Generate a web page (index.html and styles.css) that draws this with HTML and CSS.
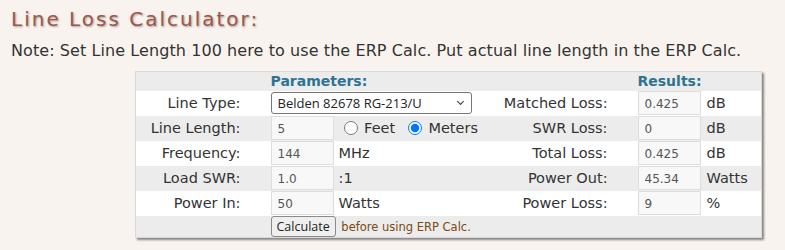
FILE: index.html
```html
<!DOCTYPE html>
<html lang="en">
  <head>
    <meta charset="UTF-8" />
    <title>Line Loss Calculator</title>
    <link rel="stylesheet" href="styles.css">
  </head>
  <body>
    <h2 class="calc-title">Line Loss Calculator:</h2>
    <p class="note">Note: Set Line Length 100 here to use the ERP Calc. Put actual line length in the ERP Calc.</p>

    <table class="calc">
      <colgroup>
        <col class="c-lbl">
        <col class="c-in">
        <col class="c-unit">
        <col class="c-lbl2">
        <col class="c-in2">
        <col class="c-unit2">
      </colgroup>
      <tr class="head">
        <td></td>
        <th colspan="2">Parameters:</th>
        <td></td>
        <th colspan="2">Results:</th>
      </tr>
      <tr>
        <td class="lbl">Line Type:</td>
        <td colspan="2">
          <span class="select-wrap">
            <select class="line-type">
              <option>Belden 82678 RG-213/U</option>
            </select>
          </span>
        </td>
        <td class="lbl">Matched Loss:</td>
        <td><input class="num" value="0.425" readonly></td>
        <td class="unit">dB</td>
      </tr>
      <tr>
        <td class="lbl">Line Length:</td>
        <td><input class="num" value="5"></td>
        <td class="unit">
          <label><input type="radio" name="len"> Feet</label>
          <label><input type="radio" name="len" checked> Meters</label>
        </td>
        <td class="lbl">SWR Loss:</td>
        <td><input class="num" value="0" readonly></td>
        <td class="unit">dB</td>
      </tr>
      <tr>
        <td class="lbl">Frequency:</td>
        <td><input class="num" value="144"></td>
        <td class="unit">MHz</td>
        <td class="lbl">Total Loss:</td>
        <td><input class="num" value="0.425" readonly></td>
        <td class="unit">dB</td>
      </tr>
      <tr>
        <td class="lbl">Load SWR:</td>
        <td><input class="num" value="1.0"></td>
        <td class="unit">:1</td>
        <td class="lbl">Power Out:</td>
        <td><input class="num" value="45.34" readonly></td>
        <td class="unit">Watts</td>
      </tr>
      <tr>
        <td class="lbl">Power In:</td>
        <td><input class="num" value="50"></td>
        <td class="unit">Watts</td>
        <td class="lbl">Power Loss:</td>
        <td><input class="num" value="9" readonly></td>
        <td class="unit">%</td>
      </tr>
      <tr class="foot">
        <td></td>
        <td colspan="5">
          <button class="btn">Calculate</button>
          <span class="hint">before using ERP Calc.</span>
        </td>
      </tr>
    </table>
  </body>
</html>
```

FILE: styles.css
```css
*,
*::before,
*::after {
  box-sizing: border-box;
}
:root {
  --bg: #f8f3ef;
  --row-alt: #ececec;
  --title: #9d5848;
  --head: #2f7393;
  --text: #333333;
  --field: #f8f8f8;
  --field-border: #dddddd;
}
body {
  margin: 0;
  padding: 9px 11px;
  background: var(--bg);
  color: var(--text);
  font-family: "DejaVu Sans", Verdana, sans-serif;
}
.calc-title {
  margin: 0;
  font-size: 20px;
  font-weight: normal;
  letter-spacing: 2px;
  line-height: 20px;
  color: var(--title);
  text-shadow: 1px 1px 2px rgba(0, 0, 0, 0.35);
}
.note {
  margin: 12px 0 10px;
  font-size: 16px;
  letter-spacing: 0.08px;
  line-height: 20px;
}
.calc {
  margin-left: 124px;
  width: 626px;
  table-layout: fixed;
  border-collapse: collapse;
  background: #fff;
  border: 1px solid #d8d8d8;
  box-shadow: 2px 2px 2px rgba(0, 0, 0, 0.45);
  font-size: 14.5px;
}
.c-lbl { width: 130px; }
.c-in { width: 70px; }
.c-unit { width: 145px; }
.c-lbl2 { width: 152px; }
.c-in2 { width: 71px; }
.c-unit2 { width: 58px; }
.calc td,
.calc th {
  padding: 0;
  height: 25px;
  white-space: nowrap;
}
.calc tr:nth-child(odd) {
  background: var(--row-alt);
}
.calc .head td,
.calc .head th {
  height: 19px;
  line-height: 14px;
}
.calc .head th {
  padding-left: 5px;
  text-align: left;
  color: var(--head);
  font-size: 14px;
  font-weight: bold;
}
.calc .lbl {
  text-align: right;
  padding-right: 25px;
}
.calc .unit {
  padding-left: 3px;
}
.calc .num {
  display: block;
  width: 63px;
  height: 24px;
  margin: 0 0 0 5px;
  padding: 2px 6px 0;
  border: 1px solid var(--field-border);
  background: var(--field);
  color: #555;
  font-family: "DejaVu Sans", Verdana, sans-serif;
  font-size: 12px;
}
.select-wrap {
  position: relative;
  display: block;
  width: 201px;
  margin-left: 5px;
}
.select-wrap::after {
  content: "";
  position: absolute;
  right: 9px;
  top: 7px;
  width: 5px;
  height: 5px;
  border-right: 1.5px solid #333;
  border-bottom: 1.5px solid #333;
  transform: rotate(45deg);
  pointer-events: none;
}
.line-type {
  display: block;
  width: 100%;
  height: 22px;
  padding: 0 20px 0 6px;
  appearance: none;
  border: 1px solid #767676;
  border-radius: 3px;
  background: #fff;
  font-family: "Open Sans", sans-serif;
  font-size: 13px;
  color: #222;
}
.unit label {
  margin-right: 3px;
}
.unit input[type="radio"] {
  margin: 0 2px 0 5px;
  width: 14px;
  height: 14px;
  vertical-align: -2px;
}
.foot td {
  height: 22px;
}
.btn {
  margin-left: 5px;
  height: 21px;
  padding: 0 5px;
  border: 1px solid #8a8a8a;
  border-radius: 3px;
  background: #efefef;
  font-family: "Open Sans", sans-serif;
  font-size: 12.5px;
  color: #222;
}
.hint {
  margin-left: 1px;
  font-size: 11.5px;
  color: #7a4a12;
}
```
